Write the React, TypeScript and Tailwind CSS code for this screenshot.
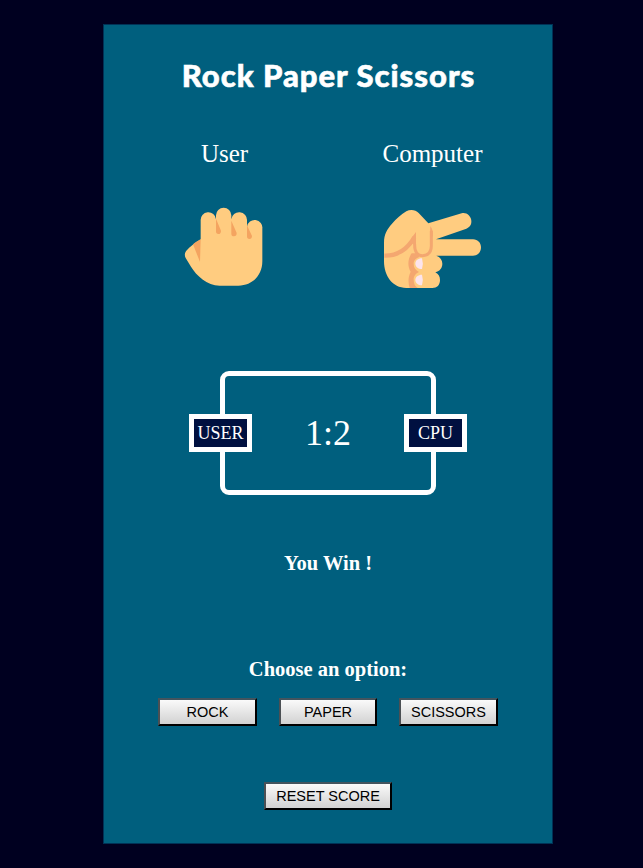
import React from "react";

function Fist() {
  return (
    <svg viewBox="0 0 300 300" className="h-[100px] w-[100px]" aria-label="Rock">
      <path d="M77 118 V62 A23 23 0 0 1 123 58 V46 A23 23 0 0 1 169 46 V58 A23 23 0 0 1 216 62 V80 A23 23 0 0 1 262 86 V184 C262 226 232 257 190 257 H134 C96 257 64 226 48 200 L32 174 C28 166 29 158 34 152 C45 139 63 127 77 118 Z" fill="#ffcc80" />
      <path d="M77 118 Q65 124 54 133 L75 186 Z" fill="#f4a460" />
      <path d="M123 56 L138 92 Q138 102 130 102 Q123 102 123 94 Z" fill="#f4a460" />
      <path d="M169 62 L185 99 Q185 109 177 109 Q169 109 169 101 Z" fill="#f4a460" />
      <path d="M216 76 L231 108 Q231 117 223 117 Q216 117 216 109 Z" fill="#f4a460" />
    </svg>
  );
}

function Scissors() {
  return (
    <svg viewBox="0 0 345 300" className="h-[100px] w-[115px]" aria-label="Scissors">
      <path d="M160 70 L260 40 C274 36 288 48 289 62 C290 75 283 83 272 87 L183 118 H294 C309 118 318 129 318 142 C318 156 309 167 294 167 H184 C196 171 202 180 202 191 C202 203 195 213 181 217 C191 222 195 230 195 240 C195 255 186 264 172 264 H94 C52 264 27 227 27 184 V128 C27 102 36 88 51 71 C64 57 79 43 94 34 C106 27 122 29 131 39 Z" fill="#ffcc80" />
      <path d="M28 167 C68 168 98 146 118 112" fill="none" stroke="#f4a770" strokeWidth="13" />
      <path d="M123 96 V140 C118 130 114 132 107 130 L111 112 Z" fill="#f4a770" />
      <path d="M119 132 C118 159 129 167 143 167 C160 166 169 155 169 138 V92" fill="none" stroke="#f4a770" strokeWidth="9" />
      <path d="M166 78 C173 86 174 98 173 110 L165 104 Z" fill="#f4a770" />
      <path d="M110 160 H126 L133 171 C119 177 116 183 116 192 C116 204 122 211 132 216 C120 222 116 230 116 239 C116 251 120 258 128 264 H104 C99 249 99 230 107 215 C97 199 98 176 110 160 Z" fill="#f4a770" />
      <path d="M141 175 C129 175 121 182 121 191 C121 200 129 207 141 207 Q146 191 141 175 Z" fill="#fce4ec" />
      <path d="M141 224 C129 224 121 231 121 240 C121 249 129 256 141 256 Q146 240 141 224 Z" fill="#fce4ec" />
    </svg>
  );
}

function Player({ name, children }: { name: string; children: React.ReactNode }) {
  return (
    <div className="flex flex-col items-center">
      <h2 className="text-[25px] leading-[58px]">{name}</h2>
      <div className="mt-[17px] flex">{children}</div>
    </div>
  );
}

const badge =
  "absolute top-[38px] flex h-[38px] w-[63px] items-center justify-center border-5 border-white bg-[#001040] text-[18px] leading-none";

const button =
  "flex items-center justify-center border-2 border-t-[#43545e] border-l-[#4c5054] border-r-black border-b-black bg-linear-to-b from-[#fafafa] to-[#d2d2d2] font-['Liberation_Sans',Arial,sans-serif] text-[14.5px] leading-none whitespace-nowrap text-black";

export default function App() {
  return (
    <main className="flex h-[868px] justify-center bg-[#000020] pt-6 pl-[13px] font-['Liberation_Serif','Times_New_Roman',serif] text-white">
      <section className="flex h-[820px] w-[450px] flex-col items-center border border-[#003256] bg-[#005f7e]">
        <h1 className="pl-px font-[Lato,sans-serif] text-[31px] leading-[100px] font-black tracking-[1px] whitespace-nowrap [-webkit-text-stroke:0.6px_white]">
          Rock Paper Scissors
        </h1>
        <div className="grid w-[417px] grid-cols-2 pl-px">
          <Player name="User"><Fist /></Player>
          <Player name="Computer"><Scissors /></Player>
        </div>
        <div className="relative mt-[71px] flex h-[124px] w-[216px] items-center justify-center rounded-[9px] border-5 border-white">
          <span className={`${badge} -left-9`}>USER</span>
          <span className="text-[36px] leading-none">1:2</span>
          <span className={`${badge} -right-9`}>CPU</span>
        </div>
        <p className="mt-14 text-[20.5px] leading-6 font-bold">You Win !</p>
        <p className="mt-[82px] text-[20.5px] leading-6 font-bold">Choose an option:</p>
        <div className="mt-[17px] flex gap-[22px]">
          <button className={`${button} h-7 w-[99px]`}>ROCK</button>
          <button className={`${button} h-7 w-[98px]`}>PAPER</button>
          <button className={`${button} h-7 w-[99px]`}>SCISSORS</button>
        </div>
        <button className={`${button} mt-14 h-7 w-32`}>RESET SCORE</button>
      </section>
    </main>
  );
}
